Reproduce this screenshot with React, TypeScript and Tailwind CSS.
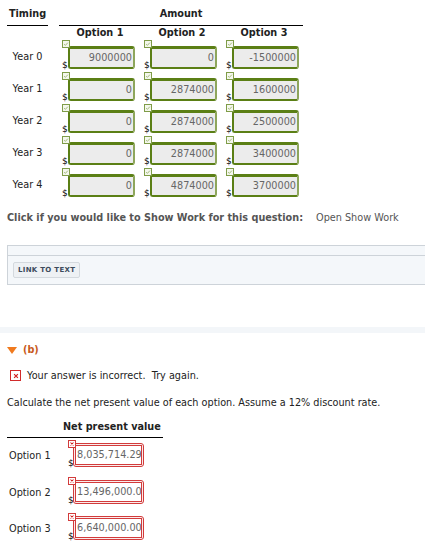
import React from 'react';

const rows = [
  { year: 'Year 0', values: ['9000000', '0', '-1500000'] },
  { year: 'Year 1', values: ['0', '2874000', '1600000'] },
  { year: 'Year 2', values: ['0', '2874000', '2500000'] },
  { year: 'Year 3', values: ['0', '2874000', '3400000'] },
  { year: 'Year 4', values: ['0', '4874000', '3700000'] },
];

const npv = [
  { label: 'Option 1', value: '8,035,714.29' },
  { label: 'Option 2', value: '13,496,000.00' },
  { label: 'Option 3', value: '6,640,000.00' },
];

const CheckMark: React.FC = () => (
  <div className="absolute left-[3px] top-0 z-10 flex h-[8px] w-[8px] items-center justify-center border border-[#7f9c48] bg-[#f4f7ec]">
    <svg viewBox="0 0 8 8" className="h-[6px] w-[6px]">
      <path d="M1.5 4.2 L3.2 5.8 L6.5 2.2" fill="none" stroke="#8aa65a" strokeWidth="1" />
    </svg>
  </div>
);

const CrossMark: React.FC = () => (
  <div className="absolute left-[3px] top-[2px] z-10 flex h-[8px] w-[8px] items-center justify-center border border-[#d23b3b] bg-white">
    <svg viewBox="0 0 8 8" className="h-[6px] w-[6px]">
      <path d="M2 2 L6 6 M6 2 L2 6" fill="none" stroke="#d21f1f" strokeWidth="1.4" />
    </svg>
  </div>
);

const GreenCell: React.FC<{ value: string }> = ({ value }) => (
  <div className="relative flex h-[32px] w-[82px] items-end pl-[3px] pb-[3px]">
    <CheckMark />
    <span className="mb-[-1px] w-[6px] text-[9px] leading-none text-black">$</span>
    <div className="flex h-[23px] w-[67px] items-center justify-end rounded-[3px] border-2 border-t-[3px] border-[#5b7f15] border-r-[#8ea65c] bg-[#ececec] pr-[1px] text-[9.7px] text-[#666]">
      {value}
    </div>
  </div>
);

const RedCell: React.FC<{ value: string }> = ({ value }) => (
  <div className="relative flex h-[36.5px] w-[82px] items-start pl-[3px] pt-[5px]">
    <CrossMark />
    <span className="mt-[16px] w-[5px] text-[9px] leading-none text-black">$</span>
    <div className="h-[24px] w-[71px] rounded-[3px] border-[1.5px] border-[#d23b3b] bg-[#fbecec] p-[1px]">
      <div className="flex h-full w-full items-center overflow-hidden whitespace-nowrap border border-[#d23b3b] bg-white pl-[1px] text-[9.7px] text-[#666]">
        {value}
      </div>
    </div>
  </div>
);

const App: React.FC = () => {
  return (
    <div className="h-[553px] w-[425px] overflow-hidden bg-white font-['DejaVu_Sans',sans-serif] text-[9.7px] text-[#222]">
      {/* Part (a) table */}
      <div className="pl-[7px] pt-[7px]">
        <div className="flex">
          <div className="w-[41px] border-b border-black pb-[3px] text-center font-bold">Timing</div>
          <div className="ml-[11px] w-[244px] border-b border-black pb-[3px] text-center font-bold">Amount</div>
        </div>
        <div className="flex">
          <div className="w-[52px]" />
          {['Option 1', 'Option 2', 'Option 3'].map((o) => (
            <div key={o} className="w-[82px] text-center font-bold">{o}</div>
          ))}
        </div>
        {rows.map((r) => (
          <div key={r.year} className="flex items-center">
            <div className="w-[41px] pt-[2px] text-center text-[#222]">{r.year}</div>
            <div className="w-[11px]" />
            {r.values.map((v, i) => (
              <GreenCell key={i} value={v} />
            ))}
          </div>
        ))}
      </div>

      <div className="mt-[11px] flex items-center pl-[7px] text-[#555]">
        <span className="font-bold">Click if you would like to Show Work for this question:</span>
        <span className="ml-[13px]">Open Show Work</span>
      </div>

      <div className="ml-[7px] mt-[19px] border border-r-0 border-[#cdd3d9] bg-[#f4f7fa]">
        <div className="h-[10px] border-b border-[#cdd3d9]" />
        <div className="px-[5px] pb-[6px] pt-[6px]">
          <div className="inline-block rounded-[2px] border border-[#d4d9de] bg-[#eef1f4] px-[4px] py-[2px] text-[7px] font-bold tracking-[0.3px] text-[#3d4b5c]">
            LINK TO TEXT
          </div>
        </div>
      </div>

      <div className="mt-[42px] h-[6px] bg-[#f3f6f9]" />

      {/* Part (b) */}
      <div className="mt-[10px] flex items-center pl-[7px] font-bold text-[#c85a1c]">
        <svg viewBox="0 0 10 7" className="h-[7px] w-[10px]">
          <path d="M0 0 L10 0 L5 7 Z" fill="#f07a1e" />
        </svg>
        <span className="ml-[6px]">(b)</span>
      </div>

      <div className="mt-[11px] flex items-center pl-[10px]">
        <div className="flex h-[11px] w-[11px] items-center justify-center border border-[#d12b2b] bg-white">
          <svg viewBox="0 0 8 8" className="h-[6px] w-[6px]">
            <path d="M1.5 1.5 L6.5 6.5 M6.5 1.5 L1.5 6.5" fill="none" stroke="#d21f1f" strokeWidth="1.6" />
          </svg>
        </div>
        <span className="ml-[6px] whitespace-pre">Your answer is incorrect.  Try again.</span>
      </div>

      <div className="mt-[13px] pl-[7px]">Calculate the net present value of each option. Assume a 12% discount rate.</div>

      <div className="mt-[9px] pl-[7px]">
        <div className="flex w-[156px] border-b border-black pb-[3px]">
          <div className="w-[56px]" />
          <div className="font-bold">Net present value</div>
        </div>
        {npv.map((n) => (
          <div key={n.label} className="flex items-center">
            <div className="w-[58px] pl-[2px]">{n.label}</div>
            <RedCell value={n.value} />
          </div>
        ))}
      </div>
    </div>
  );
};

export default App;
